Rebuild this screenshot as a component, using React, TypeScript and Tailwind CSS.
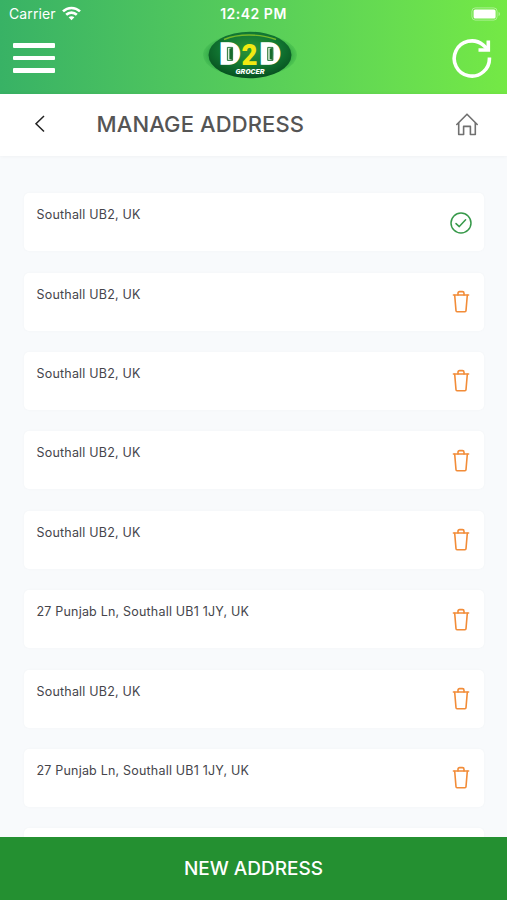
import type { ReactNode } from "react";

interface Address {
  id: number;
  label: string;
  isDefault?: boolean;
}

const addresses: Address[] = [
  { id: 1, label: "Southall UB2, UK", isDefault: true },
  { id: 2, label: "Southall UB2, UK" },
  { id: 3, label: "Southall UB2, UK" },
  { id: 4, label: "Southall UB2, UK" },
  { id: 5, label: "Southall UB2, UK" },
  { id: 6, label: "27 Punjab Ln, Southall UB1 1JY, UK" },
  { id: 7, label: "Southall UB2, UK" },
  { id: 8, label: "27 Punjab Ln, Southall UB1 1JY, UK" },
];

const WifiIcon = () => (
  <svg className="h-[15px] w-[19px]" viewBox="0 0 19 15" fill="none" stroke="white" strokeWidth={2.6}>
    <path d="M1 5.4C5.8 .8 13.2 .8 18 5.4" />
    <path d="M4.2 8.8C7.2 5.9 11.8 5.9 14.8 8.8" />
    <path d="M9.5 14.3 6.6 11.3C8.3 9.8 10.7 9.8 12.4 11.3Z" fill="white" stroke="none" />
  </svg>
);

const BatteryIcon = () => (
  <svg className="h-[14px] w-[30px]" viewBox="0 0 30 14" fill="none">
    <rect x=".9" y=".9" width="25.2" height="12.2" rx="3.4" stroke="white" strokeOpacity={0.4} />
    <rect x="2.6" y="2.4" width="22" height="9.2" rx="1.6" fill="white" />
    <path d="M27.6 4.8C29.3 5.5 29.3 8.5 27.6 9.2Z" fill="white" fillOpacity={0.5} />
  </svg>
);

const Logo = () => (
  <svg className="h-[50px] w-[96px]" viewBox="0 0 96 50">
    <defs>
      <radialGradient id="oval" cx="50%" cy="38%" r="62%">
        <stop offset="0" stopColor="#2f9435" />
        <stop offset=".55" stopColor="#127a34" />
        <stop offset="1" stopColor="#07501f" />
      </radialGradient>
      <radialGradient id="glow">
        <stop offset=".8" stopColor="#178536" stopOpacity={0.7} />
        <stop offset="1" stopColor="#2ba541" stopOpacity={0.25} />
      </radialGradient>
    </defs>
    <ellipse cx="48" cy="25" rx="47" ry="22" fill="url(#glow)" />
    <ellipse cx="48" cy="25" rx="41.5" ry="23.3" fill="url(#oval)" />
    <path d="M22 9.5C36 3.5 58 3.5 74 9.5" fill="none" stroke="#75b829" strokeWidth={1.4} />
    <g fontFamily="Roboto, 'Liberation Sans', sans-serif" fontWeight={900} textAnchor="middle">
      <text x="27.9" y="34.4" fontSize="30" fill="white" stroke="white" strokeWidth={1.6} textLength="20.5" lengthAdjust="spacingAndGlyphs">D</text>
      <text x="47.6" y="34.6" fontSize="30" fill="#f2e912" textLength="16" lengthAdjust="spacingAndGlyphs">2</text>
      <text x="68.2" y="34.4" fontSize="30" fill="white" stroke="white" strokeWidth={1.6} textLength="20.5" lengthAdjust="spacingAndGlyphs">D</text>
      <text x="48" y="43.8" fontSize="7" fill="white" fontStyle="italic" textLength="29" lengthAdjust="spacingAndGlyphs">GROCER</text>
    </g>
    <path d="M25.4 17.4h5.2v13h-5.2ZM65.7 17.4h5.2v13h-5.2Z" fill="#d9ecd9" stroke="#176b2c" strokeWidth={0.9} />
    <path d="m27.4 18.8 3-1v12.3l-3-1ZM67.7 18.8l3-1v12.3l-3-1Z" fill="#176b2c" />
  </svg>
);

const ReloadIcon = () => (
  <svg className="h-10 w-10" viewBox="0 0 40 40" fill="none" stroke="white" strokeWidth={3.6}>
    <path d="M37.4 19.5A17.6 17.6 0 1 1 31 6.9L35 10.5" />
    <path d="M36.3 2.6V12H26.5" />
  </svg>
);

const HomeIcon = () => (
  <svg className="h-6 w-6" viewBox="0 0 24 24" fill="none" stroke="#707070" strokeWidth={1.6} strokeLinejoin="round" strokeLinecap="round">
    <path d="M1.8 12.5 12 2.2 22.2 12.5" />
    <path d="M3.7 11.2V22.5H8.6V14.4H15.4V22.5H20.3V11.2" />
  </svg>
);

const CheckIcon = () => (
  <svg className="h-6 w-6" viewBox="0 0 24 24" fill="none" stroke="#37994a" strokeWidth={1.5} strokeLinecap="round" strokeLinejoin="round">
    <circle cx="12" cy="12" r="10" />
    <path d="m7 12.6 3.3 3L16.6 8.8" />
  </svg>
);

const TrashIcon = () => (
  <svg className="h-6 w-6" viewBox="0 0 24 24" fill="none" stroke="#f28c38" strokeWidth={1.6} strokeLinejoin="round" strokeLinecap="round">
    <path d="M4.4 5H19.6" />
    <path d="M9 5V3.2Q9 1.6 10.6 1.6H13.4Q15 1.6 15 3.2V5" />
    <path d="M5.7 5.2 7 20.7Q7.1 21.7 8 21.7H16Q16.9 21.7 17 20.7L18.3 5.2" />
  </svg>
);

const AddressCard = ({ label, icon }: { label: string; icon: ReactNode }) => (
  <li className="flex h-[58px] shrink-0 justify-between rounded-[5px] bg-white pt-[11px] pr-[11px] pl-[13px] shadow-[0_0_3px_rgba(0,0,0,0.03)]">
    <span className="text-[12.5px] leading-[21px] tracking-[0.2px] text-[#45454b]">{label}</span>
    <span className="mt-[6.5px]">{icon}</span>
  </li>
);

const App = () => {
  return (
    <div className="flex h-[900px] w-[507px] flex-col overflow-hidden bg-[#f8fafc] font-[Inter,'Liberation_Sans',sans-serif]">
      <header className="h-[94px] shrink-0 bg-linear-to-r from-[#38b265] to-[#74e945] text-white">
        <div className="grid h-[27px] grid-cols-3 items-center pr-[6px] pl-[6px]">
          <div className="flex items-center gap-[6px] pl-[3px] text-[14px] tracking-[0.1px]">
            <span>Carrier</span>
            <WifiIcon />
          </div>
          <span className="text-center text-[14px] font-semibold tracking-[0.5px]">12:42 PM</span>
          <div className="flex justify-end">
            <BatteryIcon />
          </div>
        </div>
        <div className="flex h-[62px] items-center justify-between pr-[15px] pl-[13px]">
          <button className="flex flex-col gap-2" aria-label="Menu">
            <span className="h-[4.5px] w-[42px] rounded-[1px] bg-white" />
            <span className="h-[4.5px] w-[42px] rounded-[1px] bg-white" />
            <span className="h-[4.5px] w-[42px] rounded-[1px] bg-white" />
          </button>
          <div className="-mt-[6px] mr-[7px]">
            <Logo />
          </div>
          <button aria-label="Reload">
            <ReloadIcon />
          </button>
        </div>
      </header>

      <div className="flex h-[62px] shrink-0 items-center bg-white pr-7 pb-[2px] pl-[34px] shadow-[0_0_4px_rgba(0,0,0,0.05)]">
        <button aria-label="Back">
          <svg className="h-[18px] w-3" viewBox="0 0 12 18" fill="none" stroke="#222" strokeWidth={1.5}>
            <path d="M10 1 2 8.7 10 16.5" />
          </svg>
        </button>
        <h1 className="ml-[50.5px] flex-1 text-[22px] font-medium tracking-[0.12px] text-[#555]">MANAGE ADDRESS</h1>
        <button aria-label="Home">
          <HomeIcon />
        </button>
      </div>

      <ul className="flex min-h-0 flex-1 flex-col gap-[21.4px] overflow-hidden px-[23.5px] pt-[37.2px]">
        {addresses.map((address) => (
          <AddressCard
            key={address.id}
            label={address.label}
            icon={address.isDefault ? <CheckIcon /> : <TrashIcon />}
          />
        ))}
        {/* top edge of the next card in the scroll list */}
        <li className="h-[58px] shrink-0 rounded-[5px] bg-white shadow-[0_0_3px_rgba(0,0,0,0.03)]" />
      </ul>

      <button className="h-[63px] shrink-0 bg-[#249031] pt-[2px] text-[19px] font-medium text-white">NEW ADDRESS</button>
    </div>
  );
};

export default App;
